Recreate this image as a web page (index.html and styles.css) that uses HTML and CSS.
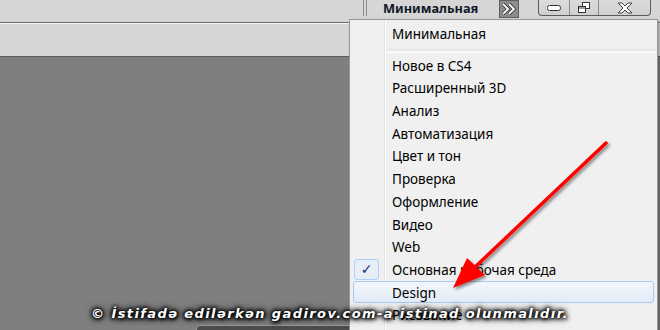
FILE: index.html
```html
<!DOCTYPE html>
<html lang="ru">
<head>
    <meta charset="UTF-8">
    <title>Рабочая среда</title>
    <link rel="stylesheet" href="styles.css">
</head>
<body>
    <div class="app">
        <div class="topbar">
            <div class="grip"></div>
            <div class="workspace">Минимальная</div>
            <div class="more">
                <svg width="20" height="18" viewBox="0 0 20 18">
                    <path d="M3.5 3.5 L9 9 L3.5 14.5 M10 3.5 L15.5 9 L10 14.5" fill="none" stroke="#3a3a3a" stroke-width="3.8"/>
                    <path d="M3.5 3.5 L9 9 L3.5 14.5 M10 3.5 L15.5 9 L10 14.5" fill="none" stroke="#fff" stroke-width="2"/>
                </svg>
            </div>
            <div class="winbtns">
                <div class="wbtn min">
                    <svg width="16" height="8" viewBox="0 0 16 8"><rect x="1.5" y="1.5" width="13" height="5" rx="2" fill="#fff" stroke="#333"/></svg>
                </div>
                <div class="wbtn restore">
                    <svg width="14" height="12" viewBox="0 0 14 12">
                        <rect x="5.5" y="0.5" width="7" height="6" fill="#fff" stroke="#333"/>
                        <rect x="1.5" y="4.5" width="7" height="6" fill="#fff" stroke="#333"/>
                        <line x1="2" y1="6" x2="8" y2="6" stroke="#333"/>
                    </svg>
                </div>
                <div class="wbtn close">
                    <svg width="18" height="12" viewBox="0 0 18 12">
                        <path d="M2 1 H6 L9 4 L12 1 H16 L11 6 L16 11 H12 L9 8 L6 11 H2 L7 6 Z" fill="#fff" stroke="#444" stroke-width="1"/>
                    </svg>
                </div>
            </div>
        </div>
        <div class="optbar"></div>
        <div class="canvas">
            <div class="panel"></div>
        </div>

        <ul class="menu">
            <li class="item">Минимальная</li>
            <li class="sep"></li>
            <li class="item">Новое в CS4</li>
            <li class="item">Расширенный 3D</li>
            <li class="item">Анализ</li>
            <li class="item">Автоматизация</li>
            <li class="item">Цвет и тон</li>
            <li class="item">Проверка</li>
            <li class="item">Оформление</li>
            <li class="item">Видео</li>
            <li class="item">Web</li>
            <li class="item checked"><span class="check">✓</span>Основная рабочая среда</li>
            <li class="item hover">Design</li>
            <li class="item">Рисование</li>
        </ul>

        <svg class="arrow" width="660" height="330" viewBox="0 0 660 330">
            <defs>
                <filter id="shadow" x="-20%" y="-20%" width="140%" height="140%">
                    <feDropShadow dx="2" dy="2" stdDeviation="1.5" flood-color="#000" flood-opacity="0.45"/>
                </filter>
            </defs>
            <g filter="url(#shadow)">
                <line x1="606" y1="143" x2="474" y2="268" stroke="#f00" stroke-width="3.5" stroke-linecap="round"/>
                <polygon points="453,288 467,258 485,275" fill="#f00"/>
            </g>
        </svg>

        <div class="watermark">© İstifadə edilərkən gadirov.com-a istinad olunmalıdır.</div>
    </div>
</body>
</html>
```

FILE: styles.css
```css
*{ box-sizing: border-box;}
body{
    margin:0;
    background:#7f7f7f;
    font-family:"Noto Sans","DejaVu Sans",sans-serif;
    overflow:hidden;
}
.app{
    position:relative;
    width:660px;
    height:330px;
    display:flex;
    flex-direction:column;
    overflow:hidden;
}
.topbar{
    height:23px;
    background:#d6d6d6;
    border-bottom:1px solid #6c6c6c;
    display:flex;
    align-items:flex-start;
    flex-shrink:0;
}
.grip{
    width:4px;
    height:16px;
    margin-left:363px;
    border-left:1px solid #8a8a8a;
    border-right:1px solid #8a8a8a;
}
.workspace{
    width:95px;
    margin-left:16px;
    font-size:12.8px;
    font-weight:bold;
    color:#101828;
    line-height:16px;
    white-space:nowrap;
}
.more{
    margin-left:21px;
    width:20px;
    height:18px;
    background:#8c8c8c;
    border:1px solid #606060;
    display:flex;
    align-items:center;
    justify-content:center;
}
.more svg{ display:block; }
.winbtns{
    margin-left:19px;
    width:113px;
    height:16px;
    display:flex;
    border:1px solid #5a5a5a;
    border-top:none;
    border-radius:0 0 4px 4px;
    background:linear-gradient(#dcdcdc,#cfcfcf);
}
.wbtn{
    display:flex;
    align-items:center;
    justify-content:center;
    border-right:1px solid #8a8a8a;
}
.wbtn svg{ display:block; }
.min{ width:31px; }
.restore{ width:29px; }
.close{ flex:1; border-right:none; }

.optbar{
    height:34px;
    background:#d6d6d6;
    border-top:1px solid #f4f4f4;
    border-bottom:1px solid #5c5c5c;
    flex-shrink:0;
}
.canvas{
    flex:1;
    background:#7f7f7f;
    padding:268px 0 0 196px;
}
.panel{
    width:160px;
    height:20px;
    background:#4c4c4c;
    border:1px solid #9a9a9a;
    border-radius:4px 0 0 0;
}

.menu{
    position:absolute;
    left:349px;
    top:19px;
    width:309px;
    height:330px;
    margin:0;
    padding:2px 2px 0 2px;
    list-style:none;
    background:#f0f0f0 linear-gradient(to right, transparent 34px, #e2e3e3 34px, #e2e3e3 35px, #fff 35px, #fff 36px, transparent 36px);
    border:1px solid #979797;
    box-shadow:2px 2px 3px rgba(0,0,0,0.3);
    font-size:13.5px;
    color:#000;
}
.item{
    position:relative;
    height:22.7px;
    line-height:22.7px;
    padding-left:38px;
    border:1px solid transparent;
    border-radius:3px;
    margin:0 1px;
    white-space:nowrap;
}
.sep{
    height:9px;
    margin-left:34px;
    padding-top:4px;
}
.sep::before{
    content:"";
    display:block;
    height:2px;
    border-top:1px solid #e0e0e0;
    border-bottom:1px solid #fff;
}
.check{
    position:absolute;
    left:0;
    top:0;
    width:25px;
    height:21px;
    border:1px solid #aecff7;
    border-radius:3px;
    background:#e6eef8;
    color:#1b2a8a;
    font-family:"DejaVu Sans",sans-serif;
    font-size:14px;
    font-weight:bold;
    line-height:19px;
    text-align:center;
}
.hover{
    border-color:#a8cbf1;
    background:linear-gradient(#f2f6fb,#e3ebf6);
}

.arrow{
    position:absolute;
    left:0;
    top:0;
}
.watermark{
    position:absolute;
    left:0;
    top:306px;
    width:660px;
    text-align:center;
    font-family:"DejaVu Sans",sans-serif;
    font-size:13px;
    font-weight:bold;
    font-style:italic;
    letter-spacing:1.4px;
    color:#fff;
    text-shadow:0 0 3px #000,0 0 4px #000,0 0 6px #000,1px 1px 4px #000,0 0 8px #000;
}
```
